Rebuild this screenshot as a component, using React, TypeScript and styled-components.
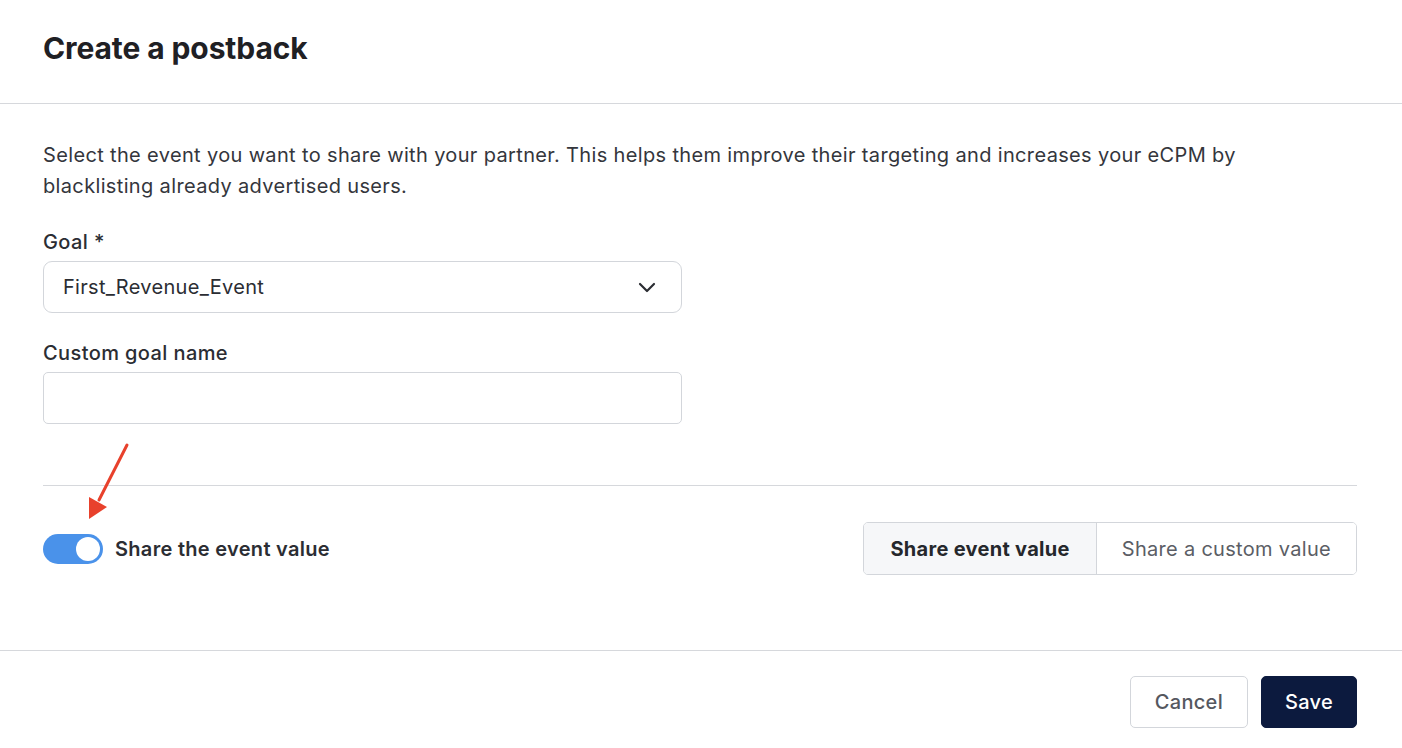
import { useState } from "react";
import styled, { createGlobalStyle } from "styled-components";

const GlobalStyle = createGlobalStyle`
  html, body { margin: 0; padding: 0; background: #fff; }
  body { font-family: Inter, "Noto Sans", sans-serif; color: #2b2d33; -webkit-font-smoothing: antialiased; }
  * { box-sizing: border-box; }
`;

const Modal = styled.div`
  width: 1402px; height: 748px; display: flex; flex-direction: column; position: relative;
`;

const Header = styled.header`
  height: 104px; padding: 0 44px 0 43px; display: flex; align-items: center;
  border-bottom: 1px solid #d6d8dc;
`;

const Title = styled.h1`
  margin: 0; font-size: 30px; font-weight: 700; color: #1f2024; letter-spacing: -0.1px; padding-bottom: 7px;
`;

const Body = styled.section`
  flex: 1; padding: 36px 45px 0 43px; display: flex; flex-direction: column;
`;

const Description = styled.p`
  margin: 0 0 28px; font-size: 20px; line-height: 31px; letter-spacing: 0.35px; color: #34363c; max-width: 1260px;
`;

const Field = styled.div<{ $last?: boolean }>`
  width: 639px; display: flex; flex-direction: column; gap: 7px;
  margin-bottom: ${p => (p.$last ? 0 : 28)}px;
`;

const Label = styled.label`
  font-size: 20px; line-height: 24px; font-weight: 500; letter-spacing: 0.4px; color: #2b2d33;
`;

const SelectBox = styled.button`
  height: 52px; width: 100%; display: flex; align-items: center; justify-content: space-between;
  padding: 0 25px 0 19px; border: 1px solid #d3d6db; border-radius: 9px; background: #fff;
  font-family: inherit; font-size: 20px; letter-spacing: 0.3px; color: #2b2d33; cursor: pointer; text-align: left;
`;

const TextInput = styled.input`
  height: 52px; width: 100%; padding: 0 19px; border: 1px solid #d3d6db; border-radius: 5px;
  font-family: inherit; font-size: 20px; color: #2b2d33; outline: none;
`;

const Divider = styled.hr`
  margin: 61px 0 0; border: 0; border-top: 1px solid #d6d8dc;
`;

const ValueRow = styled.div`
  margin-top: 36px; display: flex; align-items: center; justify-content: space-between; position: relative;
`;

const ToggleLabel = styled.label`
  display: flex; align-items: center; gap: 12px; font-size: 20px; font-weight: 600; letter-spacing: 0.3px;
  color: #2b2d33; cursor: pointer;
`;

const Track = styled.span<{ $on: boolean }>`
  width: 60px; height: 30px; border-radius: 15px; padding: 3px; display: flex;
  justify-content: ${p => (p.$on ? "flex-end" : "flex-start")};
  background: ${p => (p.$on ? "#4a92ea" : "#c9ccd2")};
`;

const Knob = styled.span`
  width: 24px; height: 24px; border-radius: 50%; background: #fff;
`;

const Segmented = styled.div`
  display: flex; height: 53px; border: 1px solid #d3d6db; border-radius: 5px; overflow: hidden;
`;

const Segment = styled.button<{ $active: boolean }>`
  border: 0; padding: 0 26px; font-family: inherit; font-size: 20px; letter-spacing: 0.3px; cursor: pointer;
  background: ${p => (p.$active ? "#f6f7f9" : "#fff")};
  color: ${p => (p.$active ? "#25272c" : "#5b5e65")};
  font-weight: ${p => (p.$active ? 700 : 400)};
  & + & { border-left: 1px solid #d3d6db; padding: 0 25px; }
`;

const Arrow = styled.svg`
  position: absolute; left: 40px; top: -80px; pointer-events: none;
`;

const Footer = styled.footer`
  height: 98px; border-top: 1px solid #d6d8dc; padding: 25px 45px 0; display: flex; justify-content: flex-end; gap: 13px;
`;

const Button = styled.button<{ $primary?: boolean }>`
  height: 52px; border-radius: 5px; font-family: inherit; font-size: 20px; letter-spacing: 0.3px; cursor: pointer;
  padding: 0 ${p => (p.$primary ? 23 : 24)}px;
  border: 1px solid ${p => (p.$primary ? "#0c1a3e" : "#d3d6db")};
  background: ${p => (p.$primary ? "#0c1a3e" : "#fff")};
  color: ${p => (p.$primary ? "#fff" : "#55585f")};
  font-weight: 500;
`;

export default function App() {
  const [on, setOn] = useState(true);
  const [mode, setMode] = useState<"event" | "custom">("event");
  const [name, setName] = useState("");

  return (
    <Modal>
      <GlobalStyle />
      <Header>
        <Title>Create a postback</Title>
      </Header>
      <Body>
        <Description>
          Select the event you want to share with your partner. This helps them improve their targeting and increases your eCPM by
          blacklisting already advertised users.
        </Description>
        <Field>
          <Label>Goal *</Label>
          <SelectBox type="button">
            First_Revenue_Event
            <svg width="18" height="11" viewBox="0 0 18 11" fill="none">
              <path d="M2 2l7 7 7-7" stroke="#2b2d33" strokeWidth="2.2" strokeLinecap="round" strokeLinejoin="round" />
            </svg>
          </SelectBox>
        </Field>
        <Field $last>
          <Label>Custom goal name</Label>
          <TextInput value={name} onChange={e => setName(e.target.value)} />
        </Field>
        <Divider />
        <ValueRow>
          <Arrow width="100" height="80" viewBox="0 0 100 80">
            <path d="M44 3 L16 58" stroke="#e8412c" strokeWidth="3" strokeLinecap="round" />
            <path d="M6 77 L6 55 L24 65 Z" fill="#e8412c" />
          </Arrow>
          <ToggleLabel onClick={() => setOn(!on)}>
            <Track $on={on}><Knob /></Track>
            Share the event value
          </ToggleLabel>
          <Segmented>
            <Segment $active={mode === "event"} onClick={() => setMode("event")}>Share event value</Segment>
            <Segment $active={mode === "custom"} onClick={() => setMode("custom")}>Share a custom value</Segment>
          </Segmented>
        </ValueRow>
      </Body>
      <Footer>
        <Button>Cancel</Button>
        <Button $primary>Save</Button>
      </Footer>
    </Modal>
  );
}
